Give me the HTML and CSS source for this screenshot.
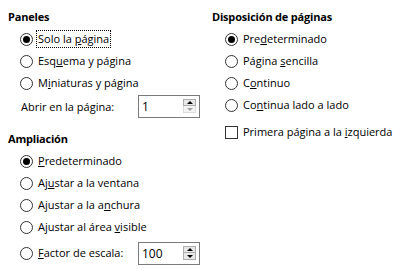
FILE: index.html
```html
<!DOCTYPE html>
<html lang="es">
<head>
<meta charset="utf-8">
<link rel="stylesheet" href="styles.css">
</head>
<body>
<div class="dialog">
  <div class="col col-left">
    <section class="group">
      <div class="group-title">Paneles</div>
      <div class="group-body">
        <div class="radio checked"><span class="circle"></span><span class="text focus">Solo la <u>p</u>ágina</span></div>
        <div class="radio"><span class="circle"></span><span class="text">Esq<u>u</u>ema y página</span></div>
        <div class="radio"><span class="circle"></span><span class="text">M<u>i</u>niaturas y página</span></div>
        <div class="spin-row">
          <span class="spin-label">Abrir en la pá<u>g</u>ina:</span>
          <div class="spin"><span class="spin-value">1</span><span class="spin-btns"><span class="btn up"></span><span class="btn down disabled"></span></span></div>
        </div>
      </div>
    </section>
    <section class="group group-zoom">
      <div class="group-title">Ampliación</div>
      <div class="group-body">
        <div class="radio checked"><span class="circle"></span><span class="text"><u>P</u>redeterminado</span></div>
        <div class="radio"><span class="circle"></span><span class="text">Aj<u>u</u>star a la ventana</span></div>
        <div class="radio"><span class="circle"></span><span class="text">Ajustar a la a<u>n</u>chura</span></div>
        <div class="radio"><span class="circle"></span><span class="text">Ajustar al área <u>v</u>isible</span></div>
        <div class="radio spin-radio"><span class="circle"></span><span class="text"><u>F</u>actor de escala:</span>
          <div class="spin"><span class="spin-value">100</span><span class="spin-btns"><span class="btn up"></span><span class="btn down"></span></span></div>
        </div>
      </div>
    </section>
  </div>
  <div class="col col-right">
    <section class="group">
      <div class="group-title">Disposición de páginas</div>
      <div class="group-body body-right">
        <div class="radio checked"><span class="circle"></span><span class="text">Pre<u>d</u>eterminado</span></div>
        <div class="radio"><span class="circle"></span><span class="text">Página <u>s</u>encilla</span></div>
        <div class="radio"><span class="circle"></span><span class="text">C<u>o</u>ntinuo</span></div>
        <div class="radio"><span class="circle"></span><span class="text">Co<u>n</u>tinua lado a lado</span></div>
        <div class="check"><span class="box"></span><span class="text">Primera página a la <u>i</u>zquierda</span></div>
      </div>
    </section>
  </div>
</div>
</body>
</html>
```

FILE: styles.css
```css
html, body {
  margin: 0;
  padding: 0;
  background: #ffffff;
}
body {
  font-family: "Open Sans", "Noto Sans", sans-serif;
  font-size: 11px;
  color: #000000;
  width: 403px;
  height: 270px;
  overflow: hidden;
}
.dialog {
  display: grid;
  grid-template-columns: 204px 191px;
  padding: 6px 0 0 8px;
}
.group-title {
  font-weight: bold;
  height: 22px;
  line-height: 22px;
  letter-spacing: -0.2px;
}
.group-body {
  padding-left: 12px;
  display: flex;
  flex-direction: column;
}
.body-right {
  padding-left: 13px;
}
.group-zoom {
  margin-top: 10px;
}
.radio, .check {
  display: flex;
  align-items: center;
  height: 22px;
}
.circle {
  box-sizing: border-box;
  width: 13px;
  height: 13px;
  border: 1px solid #333333;
  border-radius: 50%;
  background: #ffffff;
  flex: none;
  position: relative;
  margin-right: 4px;
}
.checked .circle::after {
  content: "";
  position: absolute;
  left: 2px;
  top: 2px;
  width: 7px;
  height: 7px;
  border-radius: 50%;
  background: #000000;
}
.text {
  padding: 0 1px;
  line-height: 16px;
  white-space: nowrap;
}
.text.focus {
  outline: 1px dotted #000000;
}
.box {
  box-sizing: border-box;
  width: 13px;
  height: 13px;
  border: 1px solid #333333;
  background: #ffffff;
  margin-right: 4px;
  flex: none;
}
.check {
  margin-top: 5px;
}
.spin-row {
  display: flex;
  align-items: center;
  height: 24px;
  margin-left: 1px;
}
.spin-label {
  width: 117px;
  white-space: nowrap;
}
.spin {
  box-sizing: border-box;
  width: 62px;
  height: 23px;
  border: 1px solid #7a7a7a;
  background: #ffffff;
  display: flex;
  align-items: center;
  justify-content: space-between;
  padding: 0 3px 0 3px;
  font-size: 12px;
}
.spin-btns {
  display: flex;
  flex-direction: column;
  width: 13px;
}
.btn {
  box-sizing: border-box;
  height: 7px;
  border: 1px solid #adadad;
  background: #e8e8e8;
  position: relative;
}
.btn.down {
  border-top: none;
  height: 7px;
}
.btn::after {
  content: "";
  position: absolute;
  left: 50%;
  top: 50%;
  margin-left: -3px;
  border-left: 3px solid transparent;
  border-right: 3px solid transparent;
}
.btn.up::after {
  margin-top: -2px;
  border-bottom: 3px solid #000000;
}
.btn.down::after {
  margin-top: -1px;
  border-top: 3px solid #000000;
}
.btn.disabled {
  border-color: #dcdcdc;
  background: #f4f4f4;
}
.btn.disabled::after {
  border-top-color: #a0a0a0;
}
.spin-radio {
  height: 24px;
  margin-top: 3px;
}
.spin-radio .text {
  width: 99px;
}
```
